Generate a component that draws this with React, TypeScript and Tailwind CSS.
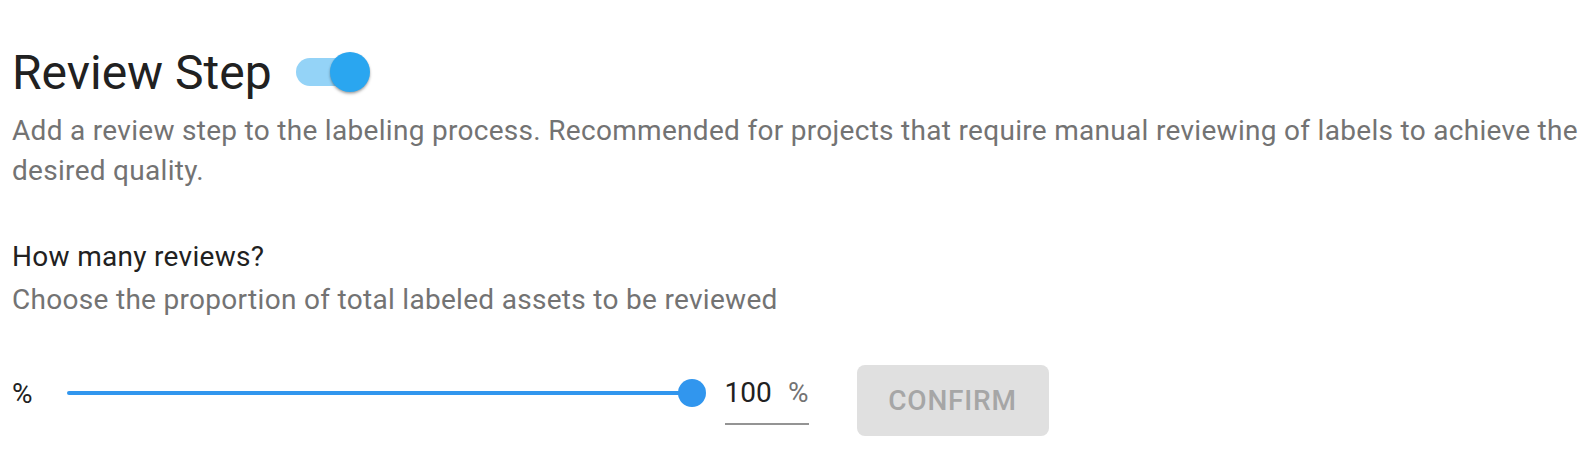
import React from "react";

// Review step settings panel
function Toggle() {
  return (
    <div className="relative mt-[26px] ml-[24px] h-[28px] w-[68px] shrink-0 rounded-full bg-[#94d3f7]">
      <div className="absolute -top-[6px] left-[34px] h-10 w-10 rounded-full bg-[#2aa6f0] shadow-[0_2px_3px_rgba(0,0,0,0.25),0_1px_2px_rgba(0,0,0,0.15)]" />
    </div>
  );
}

function Slider() {
  return (
    <div className="relative mt-[26px] ml-[34px] h-[4px] w-[625px] shrink-0 rounded-full bg-[#3196ee]">
      <div className="absolute -right-[14px] -top-[12px] h-7 w-7 rounded-full bg-[#3196ee]" />
    </div>
  );
}

export default function App() {
  return (
    <div
      className="min-h-screen bg-white px-3 pt-8 text-[#212121]"
      style={{ fontFamily: "Roboto, 'Noto Sans', sans-serif" }}
    >
      {/* Header */}
      <div className="flex items-start">
        <h1 className="mt-[9px] text-[48px] leading-[64px] font-normal">Review Step</h1>
        <Toggle />
      </div>
      <p className="mt-[6px] text-[28px] leading-[40px] tracking-[0.3px] text-[#737373]">
        Add a review step to the labeling process. Recommended for projects that require manual reviewing of labels to achieve the desired quality.
      </p>

      {/* Reviews proportion */}
      <div className="mt-[46px]">
        <p className="text-[28px] leading-[40px] tracking-[0.3px] text-[#212121]">How many reviews?</p>
        <p className="mt-[3px] text-[28px] leading-[40px] tracking-[0.3px] text-[#737373]">
          Choose the proportion of total labeled assets to be reviewed
        </p>
      </div>

      <div className="mt-[45px] flex items-start">
        <span className="mt-[9px] text-[28px] leading-[40px]">%</span>
        <Slider />
        <div className="mt-[8px] ml-[33px] flex w-[84px] justify-between border-b-2 border-[#949494] pb-[10px] text-[28px] leading-[40px]">
          <span className="text-[#212121]">100</span>
          <span className="text-[#737373]">%</span>
        </div>
        <button className="ml-12 h-[71px] w-[192px] rounded-lg bg-[#e0e0e0] text-[28px] font-medium uppercase tracking-[0.8px] text-[#a6a6a6]">
          Confirm
        </button>
      </div>
    </div>
  );
}
